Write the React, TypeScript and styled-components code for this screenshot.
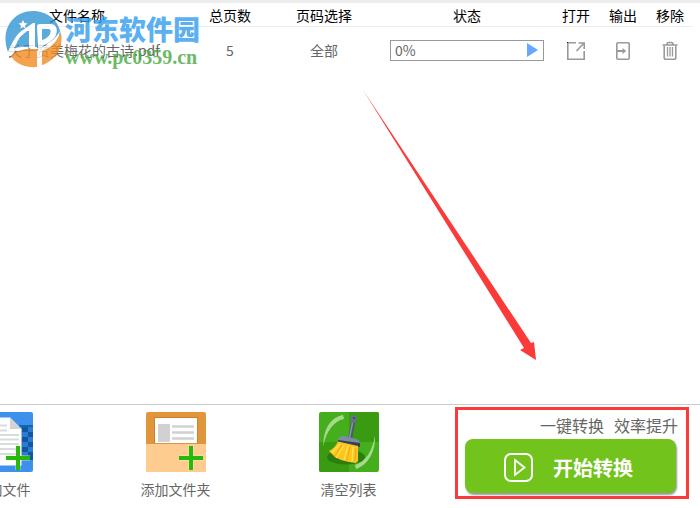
import React from 'react';
import styled, { createGlobalStyle } from 'styled-components';

const GlobalStyle = createGlobalStyle`
  * { box-sizing: border-box; }
  body {
    margin: 0;
    background: #fff;
    color: #666;
    font: 14px/20px "Noto Sans CJK SC", "Noto Sans", sans-serif;
  }
  button { font: inherit; color: inherit; padding: 0; border: 0; background: none; cursor: pointer; }
  svg { display: block; }
`;

const Page = styled.div`
  position: relative;
  display: flex;
  flex-direction: column;
  min-height: 100vh;
  overflow: hidden;
  border-top: 3px solid #ededed;
`;

const Main = styled.main`
  flex: 1;
  padding-right: 7px;
`;

const FileTable = styled.table`
  width: 100%;
  table-layout: fixed;
  border-collapse: collapse;
`;

const Column = styled.col<{ $width?: number }>`
  width: ${(p) => (p.$width ? `${p.$width}px` : 'auto')};
`;

const HeadCell = styled.th<{ $name?: boolean }>`
  height: 23px;
  padding: 1px ${(p) => (p.$name ? '39px' : '0')} 0 0;
  border-bottom: 1px solid #ededed;
  color: #000;
  font-weight: 400;
  white-space: nowrap;
`;

const Cell = styled.td<{ $name?: boolean }>`
  height: 48px;
  padding: 0 0 0 ${(p) => (p.$name ? '8px' : '0')};
  text-align: ${(p) => (p.$name ? 'left' : 'center')};
  white-space: nowrap;
`;

const Progress = styled.div`
  display: flex;
  align-items: center;
  justify-content: space-between;
  height: 21px;
  margin: 0 9px;
  padding: 0 5px 0 4px;
  border: 1px solid #999;
`;

const IconButton = styled.button`
  display: inline-flex;
  vertical-align: middle;
`;

const Watermark = styled.div`
  position: absolute;
  top: 3px;
  left: 4px;
  display: flex;
  gap: 3px;
  opacity: 0.8;
  pointer-events: none;
`;

const WatermarkText = styled.div`
  display: flex;
  flex-direction: column;
  padding-top: 5px;
`;

const SiteName = styled.span`
  color: #329ded;
  font: 900 27px/36px "Noto Sans CJK SC", sans-serif;
`;

const SiteAddress = styled.span`
  color: #48a941;
  font: 700 20px/20px "Liberation Serif", serif;
`;

const Pointer = styled.svg`
  position: absolute;
  top: 87px;
  left: 362px;
  pointer-events: none;
`;

const Footer = styled.footer`
  display: flex;
  align-items: flex-start;
  justify-content: space-between;
  height: 104px;
  padding-right: 11px;
  border-top: 1px solid #ccc;
`;

const Tools = styled.div`
  display: flex;
  margin-left: -84px;
  padding-top: 7px;
`;

const ToolButton = styled.button`
  display: flex;
  flex-direction: column;
  align-items: center;
  gap: 7px;
  width: 173px;
`;

const StartPanel = styled.section`
  width: 234px;
  height: 92px;
  margin-top: 2px;
  padding: 4px 10px 0 7px;
  border: 3px solid #fb3a3a;
`;

const Slogan = styled.p`
  display: flex;
  justify-content: flex-end;
  gap: 10px;
  margin: 0 -2px 2px 0;
  font-size: 16px;
  line-height: 23px;
`;

const StartButton = styled.button`
  display: flex;
  align-items: center;
  justify-content: center;
  gap: 20px;
  width: 100%;
  height: 54px;
  padding: 3px 4px 0 0;
  border-radius: 8px;
  background: #72c31c;
  box-shadow: 1px 2px 2px #999;
  color: #fff;
  font-size: 20px;
  font-weight: 700;
  line-height: 30px;
`;

const OpenIcon = () => (
  <svg width="20" height="20" viewBox="0 0 20 20" fill="none" stroke="#999" strokeWidth="1.6">
    <path d="M10 1.8H1.8v16.4h16.4V10M10.5 10l7-7.5M12.5 2h5.7v6" />
    <path d="M1 1h1v1H1z" fill="#222" stroke="none" />
  </svg>
);

const OutputIcon = () => (
  <svg width="20" height="20" viewBox="0 0 20 20" fill="none" stroke="#999" strokeWidth="1.6">
    <path d="M3.8 3q0-1.2 1.2-1.2h10q1.2 0 1.2 1.2v14q0 1.2-1.2 1.2H5q-1.2 0-1.2-1.2z" />
    <path d="M4 10h8" strokeWidth="2" />
    <path d="M9.5 7l3.8 3-3.8 3z" fill="#999" stroke="none" />
  </svg>
);

const TrashIcon = () => (
  <svg width="20" height="20" viewBox="0 0 20 20" fill="none" stroke="#999">
    <path d="M2.5 4h15M7 3.5q0-2 1.5-2h3q1.5 0 1.5 2" strokeWidth="1.6" />
    <path d="M4.2 4.5v12q0 1.8 1.8 1.8h8q1.8 0 1.8-1.8v-12" strokeWidth="1.6" />
    <path d="M7.5 6v9.5M10 6v9.5M12.5 6v9.5" strokeWidth="1.3" />
  </svg>
);

const PlusMark = () => (
  <g>
    <path d="M45 34v24M33 46h24" stroke="#e7f7c9" strokeWidth="5.5" opacity=".5" />
    <path d="M45 34v24M33 46h24" stroke="#28b80b" strokeWidth="4" />
  </g>
);

const DocumentIcon = () => (
  <svg width="60" height="60" viewBox="0 0 60 60">
    <rect width="60" height="60" rx="2" fill="#3d91ec" />
    <path d="M46 13h14v35H46z" fill="#2d7bd2" />
    <path
      d="M49 15h6v5h-6zM55 20h5v5h-5zM49 25h6v5h-6zM55 30h5v5h-5zM49 35h6v5h-6zM55 40h5v8h-5z"
      fill="#0f59a2"
    />
    <path d="M46 13h14v2H46z" fill="#1863ad" />
    <path d="M8 5.5h29L48.5 17v36.5H8z" fill="#fff" />
    <path d="M37 5.5V17h11.5z" fill="#d3d3d3" />
    <path d="M14 13.5h20M14 18.5h20M14 23h32M14 27.5h32M14 32h32M14 37h32M14 42h32" stroke="#d9dcdc" strokeWidth="2" />
    <PlusMark />
  </svg>
);

const FolderIcon = () => (
  <svg width="60" height="60" viewBox="0 0 60 60">
    <rect width="60" height="60" rx="2" fill="#e1963a" />
    <path d="M8 5h44v27H8z" fill="#cb8329" />
    <path d="M9 6h42v26H9z" fill="#fff" />
    <path d="M12 12h12v18H12z" fill="#d1d1d1" />
    <path d="M26 14.5h22M26 20.5h22M26 26.5h22" stroke="#d1d1d1" strokeWidth="2.4" />
    <path d="M0 32h60v26q0 2-2 2H2q-2 0-2-2z" fill="#ffcc90" />
    <path d="M0 31.5h60" stroke="#d99547" />
    <PlusMark />
  </svg>
);

const BroomIcon = () => (
  <svg width="60" height="60" viewBox="0 0 60 60">
    <rect width="60" height="60" rx="2" fill="#44ae1d" />
    <path d="M30 0h28q2 0 2 2v28H30zM0 30h30v30H2q-2 0-2-2z" fill="#399b12" />
    <ellipse cx="27" cy="45" rx="19" ry="7.5" fill="#2b7d0e" />
    <path d="M4.5 34C4 17 12 5 24 3l1 4C15 9 7 19 4.5 34z" fill="#a6d98d" />
    <path d="M56 24c.5 16-7 29-19 33l-1-4C46 50 53 40 56 24z" fill="#a6d98d" />
    <path d="M34.5 9L31 27" stroke="#4d5a71" strokeWidth="4" strokeLinecap="round" />
    <path d="M34 8L30.5 26" stroke="#8994a9" strokeWidth="1.5" />
    <ellipse cx="34.5" cy="7" rx="3.2" ry="4" transform="rotate(15 34.5 7)" fill="#66728a" />
    <circle cx="35" cy="6" r="1" fill="#38445d" />
    <path d="M20 26q1-3 5-2l12 3q5 1 4 7L19 29z" fill="#7d8ba3" />
    <path d="M19 28l22 3v4l-22-4z" fill="#344059" />
    <path d="M19 29.5l20 4.5v15l-2 2-7-1-8-2-6-3-6-6q6-3 9-9.5z" fill="#ffc51d" />
    <path d="M21 32l-8 9M25 33l-8 13M29 34l-4 14M34 35l-1 15" stroke="#ffe35b" strokeWidth="1.3" />
    <path d="M23 33l-7 11M31 35l-3 13M37 36l-1 13" stroke="#e59b0b" strokeWidth=".7" />
  </svg>
);

const PlayBadge = () => (
  <svg width="29" height="29" viewBox="0 0 29 29" fill="none" stroke="#fff">
    <rect x="1" y="1" width="27" height="27" rx="6" strokeWidth="2" />
    <path d="M11 7l9.5 7.5L11 22z" strokeWidth="1.8" />
  </svg>
);

const LogoMark = () => (
  <svg width="58" height="62" viewBox="0 0 58 62">
    <path d="M4 46C-4 25 8 5 29 5c14 0 26 9 28 24L38 41H10z" fill="#3295d3" />
    <path d="M57 27c3 15-6 29-22 33V44c10-3 17-9 22-17z" fill="#f28c22" />
    <path d="M7 50c5-5 11-7 18-7h8v18C20 62 11 57 7 50z" fill="#f28c22" />
    <path
      d="M4 46c3-8 7-15 12-20l13-9h2v25h-6v-7H14l-4 7q7-2 11-1-9 1-14 9-2-1-3-4z"
      fill="#fff"
    />
    <path d="M13 36l3-5 7-6h2v12q-6-2-12-1z" fill="#3295d3" />
    <path d="M33 20q0-2 3-2h10c8 0 8 8 5 13-3 4-8 7-13 9v20l-4 1V39z" fill="#fff" />
    <path d="M38 23h6q4 0 2 5-2 4-8 6z" fill="#3295d3" />
    <path d="M56 25c-1 9-9 17-18 20v-4c7-2 13-8 18-16z" fill="#fff" />
    <path
      d="M19 14l1.500 3 3 .5-2.500 2 .5 3-2.500-1.500-2.500 1.500.5-3-2.500-2 3-.5z"
      fill="#fff"
    />
  </svg>
);

const tools = [
  { label: '添加文件', Icon: DocumentIcon },
  { label: '添加文件夹', Icon: FolderIcon },
  { label: '清空列表', Icon: BroomIcon },
];

const actions = [
  { label: '打开', Icon: OpenIcon },
  { label: '输出', Icon: OutputIcon },
  { label: '移除', Icon: TrashIcon },
];

export default function App() {
  return (
    <>
      <GlobalStyle />
      <Page>
        <Main>
          <FileTable>
            <colgroup>
              <Column />
              <Column $width={74} />
              <Column $width={114} />
              <Column $width={172} />
              <Column $width={46} />
              <Column $width={48} />
              <Column $width={46} />
            </colgroup>
            <thead>
              <tr>
                <HeadCell $name>文件名称</HeadCell>
                <HeadCell>总页数</HeadCell>
                <HeadCell>页码选择</HeadCell>
                <HeadCell>状态</HeadCell>
                {actions.map(({ label }) => (
                  <HeadCell key={label}>{label}</HeadCell>
                ))}
              </tr>
            </thead>
            <tbody>
              <tr>
                <Cell $name>关于赞美梅花的古诗.pdf</Cell>
                <Cell>5</Cell>
                <Cell>全部</Cell>
                <Cell>
                  <Progress>
                    <span>0%</span>
                    <IconButton aria-label="开始">
                      <svg width="11" height="14" viewBox="0 0 11 14">
                        <path d="M0 0l11 7-11 7z" fill="#66a8ff" />
                      </svg>
                    </IconButton>
                  </Progress>
                </Cell>
                {actions.map(({ label, Icon }) => (
                  <Cell key={label}>
                    <IconButton aria-label={label}>
                      <Icon />
                    </IconButton>
                  </Cell>
                ))}
              </tr>
            </tbody>
          </FileTable>
        </Main>
        <Footer>
          <Tools>
            {tools.map(({ label, Icon }) => (
              <ToolButton key={label}>
                <Icon />
                {label}
              </ToolButton>
            ))}
          </Tools>
          <StartPanel>
            <Slogan>
              <span>一键转换</span>
              <span>效率提升</span>
            </Slogan>
            <StartButton>
              <PlayBadge />
              开始转换
            </StartButton>
          </StartPanel>
        </Footer>
        <Watermark>
          <LogoMark />
          <WatermarkText>
            <SiteName>河东软件园</SiteName>
            <SiteAddress>www.pc0359.cn</SiteAddress>
          </WatermarkText>
        </Watermark>
        <Pointer width="176" height="272" viewBox="0 0 176 272" aria-hidden="true">
          <path d="M1 0l168 253 3-1 2 18-16-10 4-2z" fill="#fb3a3a" />
        </Pointer>
      </Page>
    </>
  );
}
